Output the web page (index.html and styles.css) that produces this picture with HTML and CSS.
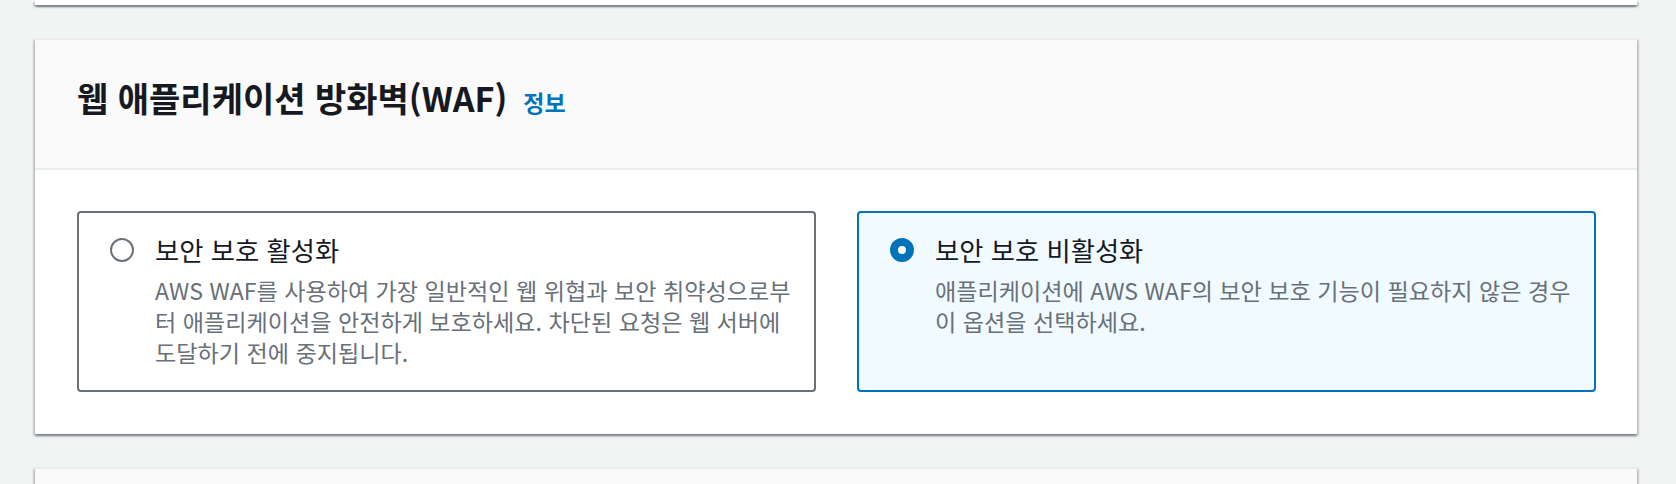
FILE: index.html
```html
<!DOCTYPE html>
<html lang="ko">
<head>
<meta charset="utf-8">
<title>웹 애플리케이션 방화벽(WAF)</title>
<link rel="stylesheet" href="styles.css">
</head>
<body>
<div class="page">
  <div class="card card-stub-top"></div>

  <section class="card">
    <header class="card-header">
      <h2 class="card-title">웹 애플리케이션 방화벽(WAF)</h2>
      <a class="info-link" href="#">정보</a>
    </header>
    <div class="card-body">
      <div class="tiles">
        <label class="tile">
          <span class="radio"></span>
          <span class="tile-text">
            <span class="tile-label">보안 보호 활성화</span>
            <span class="tile-desc">AWS WAF를 사용하여 가장 일반적인 웹 위협과 보안 취약성으로부터 애플리케이션을 안전하게 보호하세요. 차단된 요청은 웹 서버에 도달하기 전에 중지됩니다.</span>
          </span>
        </label>
        <label class="tile tile-selected">
          <span class="radio radio-checked"></span>
          <span class="tile-text">
            <span class="tile-label">보안 보호 비활성화</span>
            <span class="tile-desc">애플리케이션에 AWS WAF의 보안 보호 기능이 필요하지 않은 경우 이 옵션을 선택하세요.</span>
          </span>
        </label>
      </div>
    </div>
  </section>

  <div class="card card-stub-bottom"></div>
</div>
</body>
</html>
```

FILE: styles.css
```css
* { box-sizing: border-box; }

html, body {
  margin: 0;
  padding: 0;
  background: #f2f3f3;
  font-family: "Noto Sans CJK KR", "Noto Sans", sans-serif;
  color: #16191f;
}

.page {
  display: flex;
  flex-direction: column;
  gap: 33px;
  padding: 0 39px 0 35px;
  height: 484px;
  overflow: hidden;
}

.card {
  background: #ffffff;
  border-top: 2px solid #eaeded;
  box-shadow: 0 2px 2px 0 rgba(0, 28, 36, 0.35),
              2px 2px 2px 0 rgba(0, 28, 36, 0.15),
              -2px 2px 2px 0 rgba(0, 28, 36, 0.15);
}

.card-stub-top {
  height: 5px;
  border-top: none;
  flex: none;
}

.card-stub-bottom {
  height: 60px;
  flex: none;
  background: #fafafa;
}

.card-header {
  display: flex;
  align-items: baseline;
  gap: 16px;
  height: 130px;
  padding: 36px 42px 0 42px;
  background: #fafafa;
  border-bottom: 2px solid #eaeded;
}

.card-title {
  margin: 0;
  font-size: 34px;
  line-height: 44px;
  font-weight: 700;
  color: #16191f;
}

.info-link {
  font-size: 23px;
  font-weight: 700;
  color: #0073bb;
  text-decoration: none;
}

.card-body {
  padding: 41px 41px 42px 42px;
}

.tiles {
  display: grid;
  grid-template-columns: 1fr 1fr;
  gap: 41px;
}

.tile {
  display: flex;
  align-items: flex-start;
  gap: 21px;
  height: 181px;
  padding: 20px 12px 0 31px;
  border: 2px solid #687078;
  border-radius: 4px;
  background: #ffffff;
}

.tile-selected {
  border-color: #0073bb;
  background: #f1faff;
}

.radio {
  flex: none;
  width: 24px;
  height: 24px;
  margin-top: 5px;
  border: 2px solid #687078;
  border-radius: 50%;
  background: #ffffff;
}

.radio-checked {
  border: 8px solid #0073bb;
}

.tile-text {
  display: flex;
  flex-direction: column;
}

.tile-label {
  font-size: 26.3px;
  line-height: 34px;
  color: #16191f;
}

.tile-desc {
  margin-top: 8px;
  font-size: 23.1px;
  line-height: 31px;
  color: #687078;
}
```
